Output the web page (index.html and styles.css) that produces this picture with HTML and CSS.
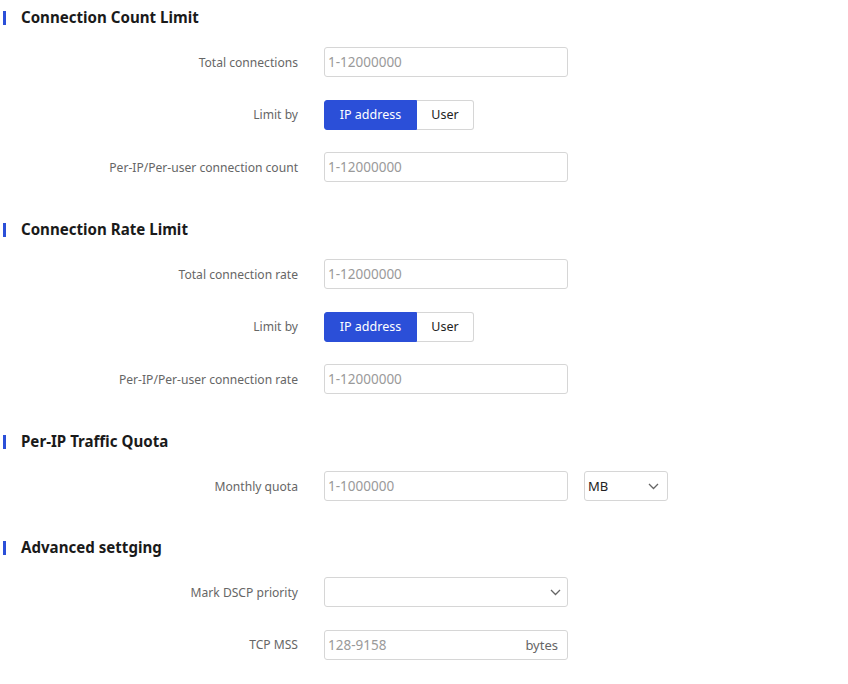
FILE: index.html
```html
<!DOCTYPE html>
<html>
<head>
<meta charset="utf-8">
<link rel="stylesheet" href="styles.css">
</head>
<body>
<div class="page">
  <section class="section">
    <h2 class="section-title">Connection Count Limit</h2>
    <div class="row">
      <label class="label">Total connections</label>
      <div class="control"><div class="input"><span class="ph">1-12000000</span></div></div>
    </div>
    <div class="row">
      <label class="label">Limit by</label>
      <div class="control">
        <div class="seg"><span class="seg-btn active">IP address</span><span class="seg-btn">User</span></div>
      </div>
    </div>
    <div class="row">
      <label class="label">Per-IP/Per-user connection count</label>
      <div class="control"><div class="input"><span class="ph">1-12000000</span></div></div>
    </div>
  </section>

  <section class="section">
    <h2 class="section-title">Connection Rate Limit</h2>
    <div class="row">
      <label class="label">Total connection rate</label>
      <div class="control"><div class="input"><span class="ph">1-12000000</span></div></div>
    </div>
    <div class="row">
      <label class="label">Limit by</label>
      <div class="control">
        <div class="seg"><span class="seg-btn active">IP address</span><span class="seg-btn">User</span></div>
      </div>
    </div>
    <div class="row">
      <label class="label">Per-IP/Per-user connection rate</label>
      <div class="control"><div class="input"><span class="ph">1-12000000</span></div></div>
    </div>
  </section>

  <section class="section">
    <h2 class="section-title">Per-IP Traffic Quota</h2>
    <div class="row">
      <label class="label">Monthly quota</label>
      <div class="control">
        <div class="input"><span class="ph">1-1000000</span></div>
        <div class="select small"><span class="val">MB</span>
          <svg class="chev" width="11" height="7" viewBox="0 0 11 7"><path d="M1 1l4.5 4.5L10 1" fill="none" stroke="#666" stroke-width="1.3"/></svg>
        </div>
      </div>
    </div>
  </section>

  <section class="section tight">
    <h2 class="section-title">Advanced settging</h2>
    <div class="row">
      <label class="label">Mark DSCP priority</label>
      <div class="control">
        <div class="select wide"><span class="val"></span>
          <svg class="chev" width="11" height="7" viewBox="0 0 11 7"><path d="M1 1l4.5 4.5L10 1" fill="none" stroke="#666" stroke-width="1.3"/></svg>
        </div>
      </div>
    </div>
    <div class="row">
      <label class="label">TCP MSS</label>
      <div class="control"><div class="input"><span class="ph">128-9158</span><span class="suffix">bytes</span></div></div>
    </div>
  </section>
</div>
</body>
</html>
```

FILE: styles.css
```css
* { box-sizing: border-box; }
html, body { margin: 0; padding: 0; background: #fff; }
body {
  font-family: "Segoe UI", "Noto Sans", "Open Sans", sans-serif;
  font-size: 13px;
  color: #333;
}
.page { width: 848px; padding-bottom: 20px; }
.section { margin-bottom: 30px; }
.section:nth-child(3) { margin-bottom: 29px; }
.section:last-child { margin-bottom: 0; }
.section-title {
  position: relative;
  margin: 0 0 13px 0;
  height: 34px;
  line-height: 34px;
  padding-left: 21px;
  font-size: 15.1px;
  font-weight: 700;
  color: #1a1a1a;
}
.section-title::before {
  content: "";
  position: absolute;
  left: 3px;
  top: 11px;
  width: 3px;
  height: 14px;
  background: #2b4fd8;
}
.row {
  display: grid;
  grid-template-columns: 298px auto;
  column-gap: 26px;
  align-items: center;
  height: 30px;
  margin-bottom: 22.5px;
}
.row:last-child { margin-bottom: 0; }
.label {
  text-align: right;
  color: #666;
  font-size: 12.1px;
  white-space: nowrap;
}
.control { display: flex; align-items: center; gap: 16px; }
.input {
  width: 244px;
  height: 30px;
  border: 1px solid #d6d6d6;
  border-radius: 3px;
  display: flex;
  align-items: center;
  justify-content: space-between;
  padding: 0 9px 0 3px;
}
.ph { color: #9a9a9a; font-size: 13.5px; }
.suffix { color: #666; font-size: 13px; }
.seg {
  display: flex;
  height: 30px;
}
.seg-btn {
  display: flex;
  align-items: center;
  justify-content: center;
  height: 30px;
  font-size: 12.5px;
  border: 1px solid #d6d6d6;
  color: #222;
  background: #fff;
}
.seg-btn.active {
  width: 93px;
  background: #2b4fd8;
  border-color: #2b4fd8;
  color: #fff;
  border-radius: 3px 0 0 3px;
}
.seg-btn:not(.active) {
  width: 57px;
  border-left: none;
  border-radius: 0 3px 3px 0;
}
.select {
  height: 30px;
  border: 1px solid #d6d6d6;
  border-radius: 3px;
  display: flex;
  align-items: center;
  justify-content: space-between;
  padding: 0 8px 0 3px;
}
.select.small { width: 84px; }
.select.wide { width: 244px; padding-right: 6px; }
.val { color: #222; font-size: 13px; }
.chev { display: block; }
```
